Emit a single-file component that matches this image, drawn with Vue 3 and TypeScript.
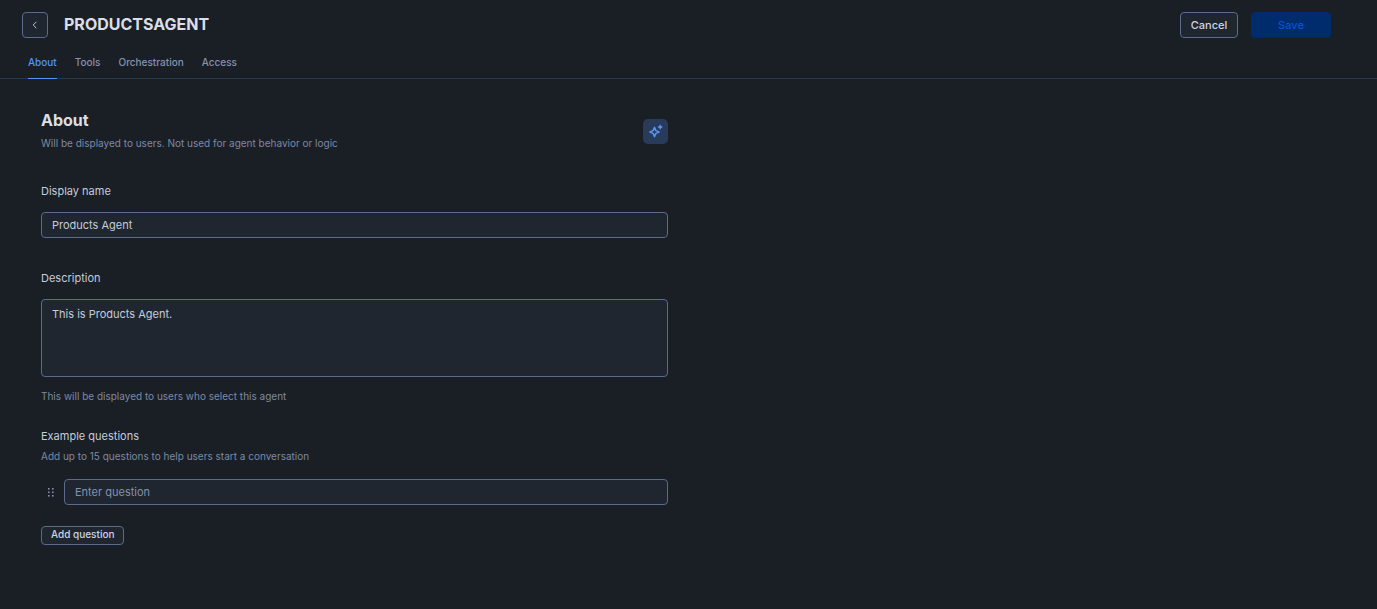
<script setup lang="ts">
import { ref } from 'vue'

interface Tab {
  id: string
  label: string
}

const tabs: Tab[] = [
  { id: 'about', label: 'About' },
  { id: 'tools', label: 'Tools' },
  { id: 'orchestration', label: 'Orchestration' },
  { id: 'access', label: 'Access' },
]

const activeTab = ref<string>('about')
const displayName = ref<string>('Products Agent')
const description = ref<string>('This is Products Agent.')
const questions = ref<string[]>([''])
const maxQuestions = 15

function addQuestion(): void {
  if (questions.value.length < maxQuestions) questions.value.push('')
}
</script>

<template>
  <div class="page">
    <header class="header">
      <div class="title-bar">
        <button class="btn back" type="button" aria-label="Back">
          <svg width="6" height="8" viewBox="0 0 6 8" fill="none" aria-hidden="true">
            <path d="M4.4 0.8 1.2 4l3.2 3.2" stroke="currentColor" stroke-width="0.9" />
          </svg>
        </button>
        <h1 class="title">PRODUCTSAGENT</h1>
        <div class="actions">
          <button class="btn cancel" type="button">Cancel</button>
          <button class="btn save" type="button" disabled>Save</button>
        </div>
      </div>
      <nav class="tabs">
        <a
          v-for="tab in tabs"
          :key="tab.id"
          class="tab"
          :class="{ active: tab.id === activeTab }"
          :href="'#' + tab.id"
          @click.prevent="activeTab = tab.id"
        >{{ tab.label }}</a>
      </nav>
    </header>

    <main class="form">
      <div class="section-head">
        <div>
          <h2 class="heading">About</h2>
          <p class="hint">Will be displayed to users. Not used for agent behavior or logic</p>
        </div>
        <button class="generate" type="button" aria-label="Generate">
          <svg width="15" height="15" viewBox="0 0 15 15" fill="none" aria-hidden="true">
            <path d="M6.5 3.4 7.9 6.6 11.1 8 7.9 9.4 6.5 12.6 5.1 9.4 1.9 8 5.1 6.6Z" stroke="currentColor" stroke-width="1.5" stroke-linejoin="round" />
            <path d="M12.2 0.2 13.2 2 15 3 13.2 4 12.2 5.8 11.2 4 9.4 3 11.2 2Z" fill="currentColor" />
          </svg>
        </button>
      </div>

      <div class="field">
        <label class="label" for="display-name">Display name</label>
        <input id="display-name" v-model="displayName" class="control" type="text" />
      </div>

      <div class="field">
        <label class="label" for="description">Description</label>
        <textarea id="description" v-model="description" class="control area"></textarea>
        <p class="hint">This will be displayed to users who select this agent</p>
      </div>

      <fieldset class="examples">
        <legend class="label">Example questions</legend>
        <p class="hint">Add up to 15 questions to help users start a conversation</p>
        <div v-for="(_, i) in questions" :key="i" class="question">
          <svg class="grip" width="6" height="9" viewBox="0 0 6 9" fill="currentColor" aria-hidden="true">
            <rect x="0" y="0" width="1.6" height="1.6" />
            <rect x="4" y="0" width="1.6" height="1.6" />
            <rect x="0" y="3.5" width="1.6" height="1.6" />
            <rect x="4" y="3.5" width="1.6" height="1.6" />
            <rect x="0" y="7" width="1.6" height="1.6" />
            <rect x="4" y="7" width="1.6" height="1.6" />
          </svg>
          <input v-model="questions[i]" class="control" type="text" placeholder="Enter question" :aria-label="'Question ' + (i + 1)" />
        </div>
        <button class="btn add" type="button" @click="addQuestion">Add question</button>
      </fieldset>
    </main>
  </div>
</template>

<style>
body {
  background: #1a1e25;
}
</style>

<style scoped>
.page {
  min-height: 100vh;
  box-sizing: border-box;
  background: #1a1e25;
  color: #c3cddb;
  font-family: Inter, "Liberation Sans", sans-serif;
  font-size: 11px;
  line-height: 16px;
}

h1,
h2,
p {
  margin: 0;
}

.header {
  border-bottom: 1px solid #2a364d;
}

.title-bar {
  display: flex;
  align-items: center;
  padding: 12px 46px 0 22px;
}

.btn {
  box-sizing: border-box;
  height: 26px;
  padding: 0 9px;
  border: 1px solid #5c6b8a;
  border-radius: 4px;
  background: #1f262f;
  color: #cdd5e1;
  font: 500 11px/16px Inter, "Liberation Sans", sans-serif;
}

.back {
  display: flex;
  align-items: center;
  justify-content: center;
  width: 26px;
  padding: 0;
}

.title {
  margin-left: 16px;
  padding-bottom: 2px;
  color: #d9dee8;
  font-size: 16px;
  line-height: 24px;
  font-weight: 700;
}

.actions {
  display: flex;
  gap: 13px;
  margin-left: auto;
}

.cancel {
  min-width: 58px;
}

.save {
  width: 80px;
  border-color: #002c6e;
  background: #002c6e;
  color: #0453d6;
}

.tabs {
  display: flex;
  gap: 18px;
  padding: 8px 28px 0;
}

.tab {
  padding: 8px 0;
  margin-bottom: -1px;
  border-bottom: 1px solid transparent;
  color: #8593ad;
  font-size: 10px;
  font-weight: 500;
  text-decoration: none;
}

.tab.active {
  border-bottom-color: #5594f8;
  color: #5594f8;
}

.form {
  max-width: 627px;
  padding: 29px 41px 0;
}

.section-head {
  display: flex;
  align-items: flex-end;
  justify-content: space-between;
  margin-bottom: 32px;
}

.heading {
  color: #d9dee8;
  font-size: 16px;
  line-height: 24px;
  font-weight: 700;
}

.hint {
  color: #7c8aa6;
  font-size: 10px;
}

.section-head .hint {
  margin-top: 3px;
}

.generate {
  display: flex;
  align-items: center;
  justify-content: center;
  width: 25px;
  height: 25px;
  margin-bottom: 7px;
  padding: 0;
  border: 0;
  border-radius: 5px;
  background: #293b59;
  color: #5594f8;
}

.field {
  display: flex;
  flex-direction: column;
  margin-bottom: 32px;
}

.label {
  padding: 0;
  color: #c3cddb;
}

.field .label {
  margin-bottom: 13px;
}

.control {
  box-sizing: border-box;
  width: 100%;
  height: 26px;
  margin: 0;
  padding: 4px 10px;
  border: 1px solid #5c6b8a;
  border-radius: 4px;
  background: #1f262f;
  color: #c3cddb;
  font: 400 11px/16px Inter, "Liberation Sans", sans-serif;
}

.control::placeholder {
  color: #8391ab;
  opacity: 1;
}

.area {
  height: 78px;
  padding: 6px 10px;
  resize: none;
}

.field .hint {
  margin-top: 11px;
  margin-bottom: -8px;
}

.examples {
  min-width: 0;
  margin: 0;
  padding: 0;
  border: 0;
}

.examples .hint {
  margin-top: 4px;
}

.question {
  display: flex;
  align-items: center;
  gap: 10px;
  margin-top: 15px;
  padding-left: 7px;
}

.grip {
  flex: none;
  color: #8391ab;
}

.add {
  height: 19px;
  margin-top: 21px;
  padding: 0 9px 3px;
  font-size: 10px;
  line-height: 14px;
}
</style>
